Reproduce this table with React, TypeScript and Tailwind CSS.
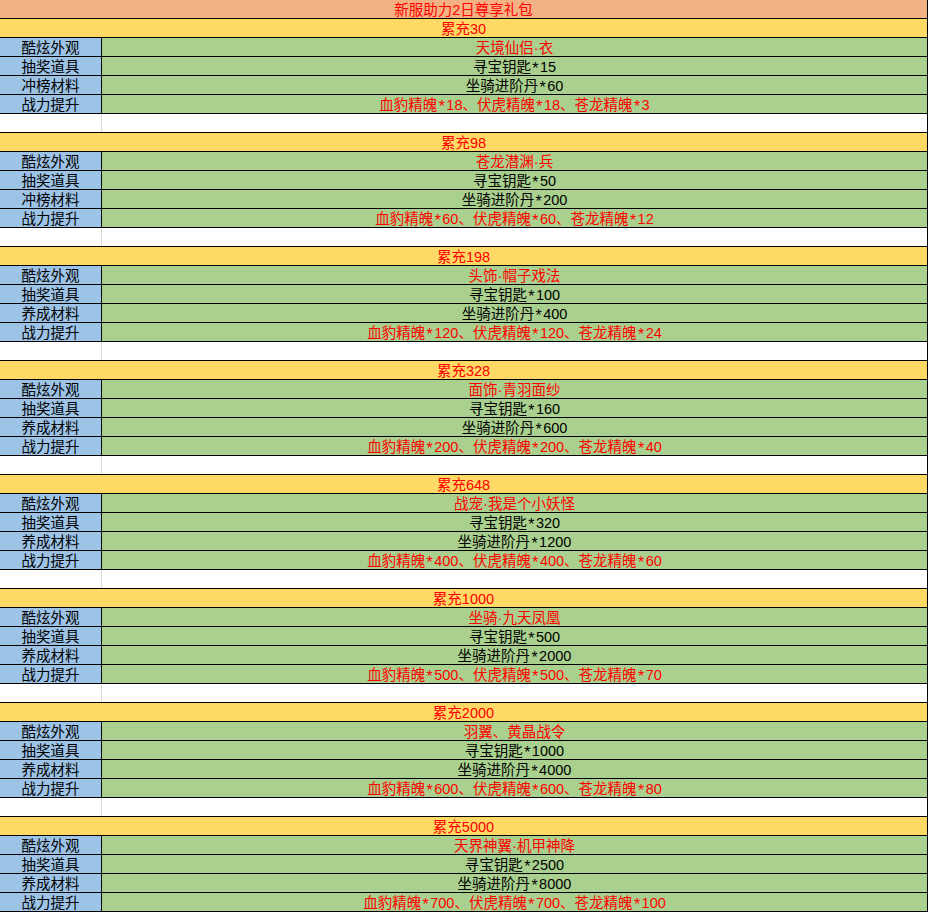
import React from "react";

type Section = {
  total: string;
  look: string;
  keys: string;
  matLabel: string;
  mat: string;
  power: string;
};

const sections: Section[] = [
  { total: "30", look: "天境仙侣·衣", keys: "寻宝钥匙*15", matLabel: "冲榜材料", mat: "坐骑进阶丹*60", power: "血豹精魄*18、伏虎精魄*18、苍龙精魄*3" },
  { total: "98", look: "苍龙潜渊·兵", keys: "寻宝钥匙*50", matLabel: "冲榜材料", mat: "坐骑进阶丹*200", power: "血豹精魄*60、伏虎精魄*60、苍龙精魄*12" },
  { total: "198", look: "头饰·帽子戏法", keys: "寻宝钥匙*100", matLabel: "养成材料", mat: "坐骑进阶丹*400", power: "血豹精魄*120、伏虎精魄*120、苍龙精魄*24" },
  { total: "328", look: "面饰·青羽面纱", keys: "寻宝钥匙*160", matLabel: "养成材料", mat: "坐骑进阶丹*600", power: "血豹精魄*200、伏虎精魄*200、苍龙精魄*40" },
  { total: "648", look: "战宠·我是个小妖怪", keys: "寻宝钥匙*320", matLabel: "养成材料", mat: "坐骑进阶丹*1200", power: "血豹精魄*400、伏虎精魄*400、苍龙精魄*60" },
  { total: "1000", look: "坐骑·九天凤凰", keys: "寻宝钥匙*500", matLabel: "养成材料", mat: "坐骑进阶丹*2000", power: "血豹精魄*500、伏虎精魄*500、苍龙精魄*70" },
  { total: "2000", look: "羽翼、黄晶战令", keys: "寻宝钥匙*1000", matLabel: "养成材料", mat: "坐骑进阶丹*4000", power: "血豹精魄*600、伏虎精魄*600、苍龙精魄*80" },
  { total: "5000", look: "天界神翼·机甲神降", keys: "寻宝钥匙*2500", matLabel: "养成材料", mat: "坐骑进阶丹*8000", power: "血豹精魄*700、伏虎精魄*700、苍龙精魄*100" },
];

const font = { fontFamily: '"Liberation Sans", "Noto Sans CJK SC", sans-serif' };

function Txt({ value }: { value: string }) {
  const parts = value.split("*");
  return (
    <span className="whitespace-nowrap">
      {parts.map((p, i) => (
        <React.Fragment key={i}>
          {i > 0 && (
            <span className="inline-block w-[9px] text-center text-[16px] leading-none translate-y-[2px]">*</span>
          )}
          {p}
        </React.Fragment>
      ))}
    </span>
  );
}

function DataRow({ label, value, red }: { label: string; value: string; red?: boolean }) {
  return (
    <div className="flex h-[19px] border-b border-black">
      <div className="w-[102px] shrink-0 bg-[#9dc3e6] border-r border-black flex items-center justify-center text-[14.5px] leading-[18px] pt-[1px] text-black">
        {label}
      </div>
      <div
        className={`flex-1 bg-[#a9d08e] flex items-center justify-center text-[14.5px] leading-[18px] pt-[1px] ${
          red ? "text-[#ff0000]" : "text-black"
        }`}
      >
        <Txt value={value} />
      </div>
    </div>
  );
}

function FullRow({ text, bg }: { text: string; bg: string }) {
  return (
    <div className={`h-[19px] border-b border-black flex items-center justify-center text-[14.5px] leading-[18px] pt-[1px] text-[#ff0000] ${bg}`}>
      {text}
    </div>
  );
}

function BlankRow() {
  return (
    <div className="flex h-[19px] border-b border-black bg-white">
      <div className="w-[102px] shrink-0 border-r border-[#d9d9d9]" />
      <div className="flex-1" />
    </div>
  );
}

export default function App() {
  return (
    <div className="w-[928px] bg-white" style={font}>
      <div className="border-r border-black">
        <FullRow text="新服助力2日尊享礼包" bg="bg-[#f4b183]" />
        {sections.map((s, i) => (
          <React.Fragment key={s.total}>
            {i > 0 && <BlankRow />}
            <FullRow text={`累充${s.total}`} bg="bg-[#ffd966]" />
            <DataRow label="酷炫外观" value={s.look} red />
            <DataRow label="抽奖道具" value={s.keys} />
            <DataRow label={s.matLabel} value={s.mat} />
            <DataRow label="战力提升" value={s.power} red />
          </React.Fragment>
        ))}
      </div>
    </div>
  );
}
